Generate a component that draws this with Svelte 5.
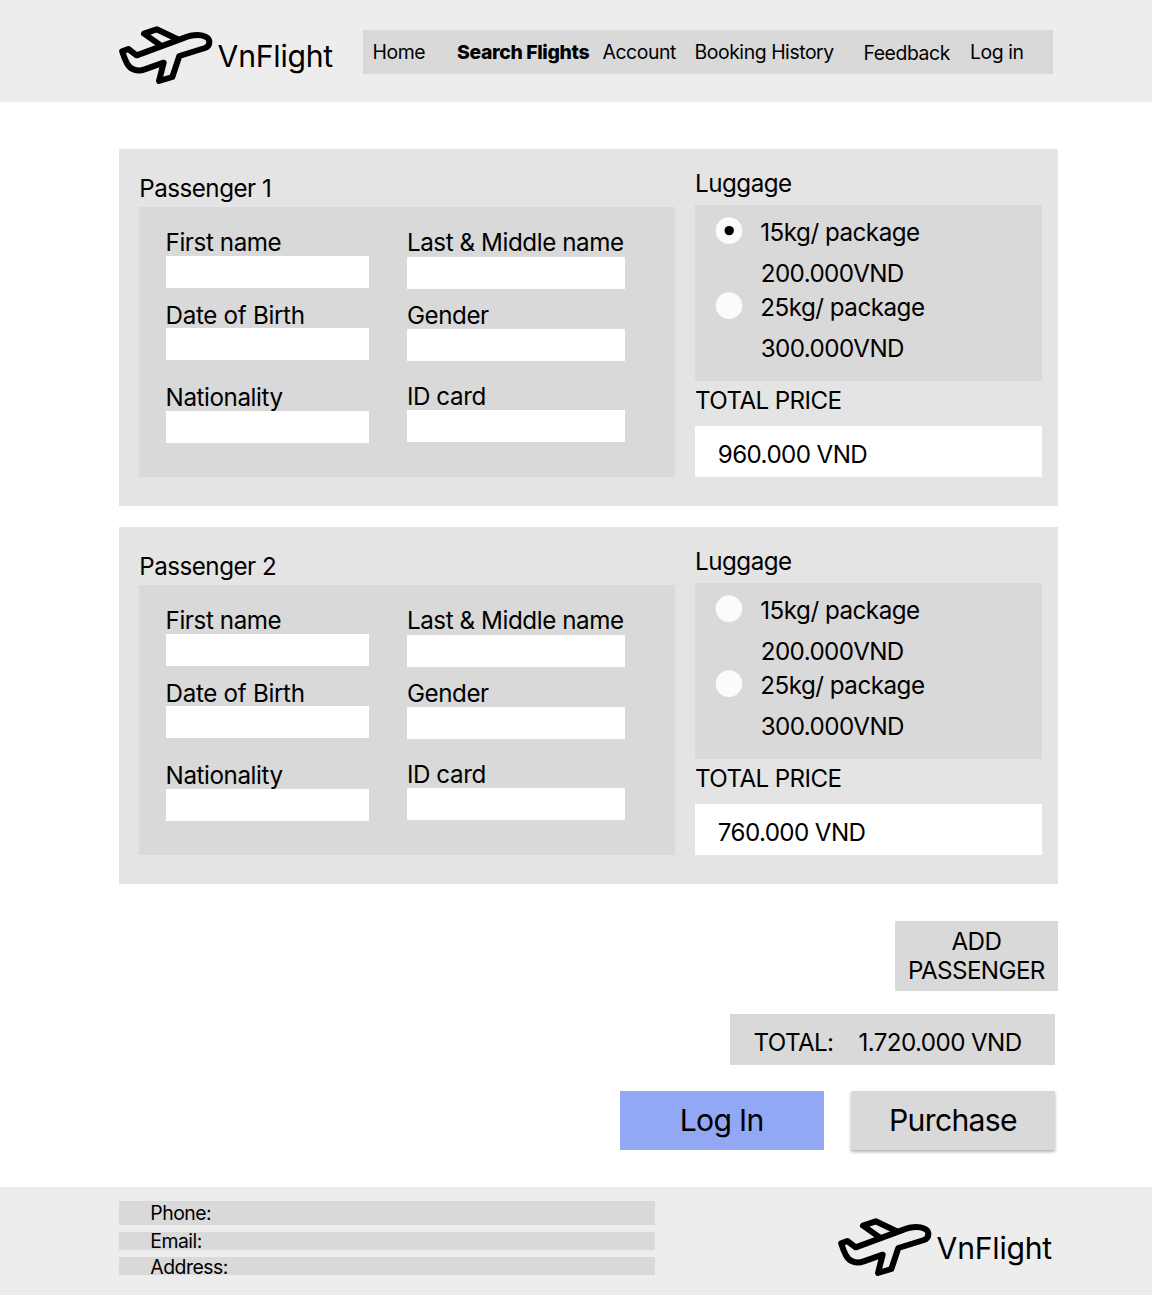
<script>
  const navItems = [
    { label: 'Home', cls: 'home' },
    { label: 'Search Flights', cls: 'search' },
    { label: 'Account', cls: 'account' },
    { label: 'Booking History', cls: 'history' },
    { label: 'Feedback', cls: 'feedback' },
    { label: 'Log in', cls: 'login' }
  ];

  const fieldColumns = [
    { side: 'left', fields: ['First name', 'Date of Birth', 'Nationality'] },
    { side: 'right', fields: ['Last & Middle name', 'Gender', 'ID card'] }
  ];

  const luggage = [
    { weight: '15kg/ package', price: '200.000VND' },
    { weight: '25kg/ package', price: '300.000VND' }
  ];

  const passengers = [
    { name: 'Passenger 1', selected: 0, total: '960.000 VND' },
    { name: 'Passenger 2', selected: -1, total: '760.000 VND' }
  ];

  const contacts = ['Phone:', 'Email:', 'Address:'];
</script>

{#snippet logo()}
  <div class="logo">
    <svg width="94" height="59" viewBox="27 33 282 177" fill="none" stroke="#000" stroke-width="18" stroke-linejoin="round" stroke-linecap="round">
      <path d="M36.5 109L55 102L80 121L218 70C246 59 270 58 287 65C301 71 303 92 285 99L208 123L187 186L147 198L161 143L104 163C81 171 60 163 51 145C44 132 40 120 36.5 109Z" />
      <path d="M152 91L102 56L140 43L203 73" />
    </svg>
    <span>VnFlight</span>
  </div>
{/snippet}

<div class="page">
  <header>
    {@render logo()}
    <nav>
      {#each navItems as item}
        <a class={item.cls} href="#top">{item.label}</a>
      {/each}
    </nav>
  </header>

  <main>
    {#each passengers as p}
      <section class="card">
        <div class="details">
          <h2>{p.name}</h2>
          <div class="form">
            {#each fieldColumns as col}
              <div class="col {col.side}">
                {#each col.fields as f}
                  <label><span>{f}</span><input type="text" /></label>
                {/each}
              </div>
            {/each}
          </div>
        </div>
        <div class="side">
          <h2>Luggage</h2>
          <div class="options">
            {#each luggage as l, i}
              <div class="option">
                <svg class="radio" width="28" height="28" viewBox="0 0 28 28">
                  <circle cx="14" cy="13.6" r="13.3" fill="#fbfbfb" />
                  {#if p.selected === i}<circle cx="14.2" cy="13.6" r="4.7" />{/if}
                </svg>
                <div class="texts"><span>{l.weight}</span><span class="caps">{l.price}</span></div>
              </div>
            {/each}
          </div>
          <h3 class="caps">TOTAL PRICE</h3>
          <div class="price caps">{p.total}</div>
        </div>
      </section>
    {/each}

    <div class="actions">
      <button class="add caps">ADD PASSENGER</button>
      <div class="total caps"><span>TOTAL:</span><span>1.720.000 VND</span></div>
      <div class="buttons">
        <button class="primary">Log In</button>
        <button class="purchase">Purchase</button>
      </div>
    </div>
  </main>

  <footer>
    <div class="contacts">
      {#each contacts as c}
        <div><span>{c}</span></div>
      {/each}
    </div>
    {@render logo()}
  </footer>
</div>

<style>
  :global(body) { background: #fff; }
  .page {
    width: 1152px;
    height: 1296px;
    font-family: Inter, sans-serif;
    font-size: 24.2px;
    line-height: 29px;
    letter-spacing: -0.5px;
    color: #000;
    white-space: nowrap;
    display: flex;
    flex-direction: column;
  }
  .page, .page :global(*) { box-sizing: border-box; }
  h2, h3 { margin: 0; font-size: inherit; font-weight: 400; }
  button {
    border: 0;
    padding: 0;
    color: inherit;
    font: inherit;
    letter-spacing: inherit;
    background: #d9d9d9;
  }
  .page .caps { letter-spacing: -0.6px; }

  header {
    height: 102px;
    background: #ededed;
    display: flex;
    align-items: flex-start;
    padding: 26px 0 0 119px;
  }
  .logo { display: flex; width: 244px; height: 60px; }
  .logo svg { flex: none; }
  .logo span { font-size: 30.2px; line-height: 36px; margin: 12px 0 0 4.6px; letter-spacing: -0.25px; }
  nav {
    width: 690px;
    height: 44.3px;
    margin-top: 4px;
    background: #d9d9d9;
    display: flex;
    padding: 11px 0 0 9.5px;
    font-size: 19.4px;
    line-height: 23px;
    letter-spacing: -0.43px;
  }
  nav a { color: inherit; text-decoration: none; flex: none; }
  .home { width: 84.5px; }
  .search { width: 145.5px; font-weight: 800; letter-spacing: -0.36px; }
  .account { width: 92px; }
  .history { width: 169px; }
  .feedback { width: 106.5px; padding-top: 1px; }

  main {
    flex: none;
    height: 1085px;
    padding: 47px 94.3px 0 119.3px;
  }
  .card {
    height: 356.5px;
    margin-bottom: 21.5px;
    background: #e4e4e4;
    display: flex;
    padding-left: 19.9px;
  }
  .details { width: 536px; padding-top: 25px; }
  .form {
    height: 270.5px;
    margin-top: 3.5px;
    background: #d9d9d9;
    display: flex;
    padding: 20.8px 0 0 26.4px;
    gap: 38px;
  }
  .col label { display: flex; flex-direction: column; }
  .col span { height: 29px; line-height: 31px; letter-spacing: -0.42px; }
  .left { width: 203.3px; }
  .right { width: 217.8px; padding-top: 0.5px; }
  .right label:first-child span { line-height: 29px; }
  .left label:nth-child(2) span { line-height: 33px; letter-spacing: -0.32px; }
  .col input {
    width: 100%;
    height: 32px;
    border: 0;
    border-radius: 0;
    padding: 0;
    background: #fff;
  }
  .col label:nth-child(2) { margin-top: 10.7px; }
  .left label:nth-child(3) { margin-top: 22.3px; }
  .right label:nth-child(2) { margin-top: 11.7px; }
  .right label:nth-child(3) { margin-top: 20px; }

  .side { width: 347.5px; margin-left: 19.8px; padding-top: 20.2px; }
  .options {
    height: 176px;
    margin-top: 7px;
    background: #d9d9d9;
    padding: 12px 0 0 20px;
  }
  .option { display: flex; height: 75px; }
  .radio { flex: none; }
  .texts { display: flex; flex-direction: column; gap: 12.3px; margin-left: 17.3px; padding-top: 0.6px; }
  .texts .caps { padding-left: 0.5px; }
  h3 { padding-top: 5.2px; height: 44.5px; }
  .price { height: 51px; background: #fff; padding: 14px 0 0 22.8px; }

  .actions { display: flex; flex-direction: column; align-items: flex-end; padding-top: 16px; }
  .add { width: 162.7px; height: 70px; white-space: normal; padding: 0 10px 1px; line-height: 29px; }
  .total {
    width: 325px;
    height: 51.3px;
    margin: 22.7px 2.7px 0 0;
    padding: 14px 0 0 23.5px;
    background: #d9d9d9;
    display: flex;
  }
  .total span:first-child { width: 105px; }
  .buttons { display: flex; gap: 27.3px; margin: 26px 2.7px 0 0; }
  .buttons button { width: 204px; height: 58.7px; font-size: 30.2px; line-height: 36px; letter-spacing: -0.7px; }
  .buttons .primary { background: #93a8f4; }
  .purchase { box-shadow: 0 2px 3px rgba(0, 0, 0, 0.3); }

  footer {
    height: 108px;
    background: #ededed;
    display: flex;
    justify-content: space-between;
    padding: 14.3px 70px 0 119.3px;
  }
  .contacts { width: 536px; font-size: 19.4px; }
  .contacts div { display: flex; align-items: center; height: 18.2px; margin-bottom: 6.6px; padding-left: 31px; background: #d9d9d9; }
  .contacts div:first-child { height: 24px; margin-bottom: 7px; }
  .contacts span { line-height: 23px; }
  .contacts div:last-child span { line-height: 24px; padding-top: 1px; }
  footer .logo { margin-top: 16.7px; }
</style>
